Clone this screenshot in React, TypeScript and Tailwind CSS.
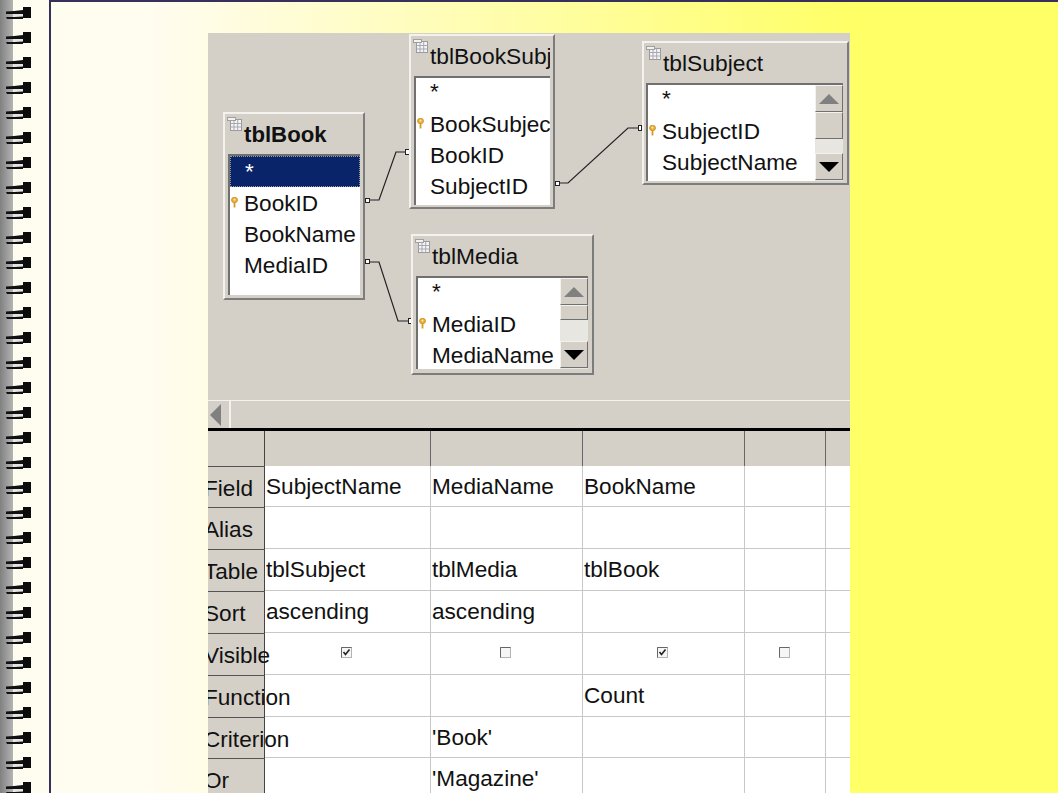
const SANS = "font-['Liberation_Sans',Arial,sans-serif]"

interface Field {
  name: string
  isKey?: boolean
  selected?: boolean
}

interface TableNodeProps {
  title: string
  bold?: boolean
  fields: Field[]
  className: string
  listClass: string
  scroll?: 'subject' | 'media'
}

function TableIcon() {
  return (
    <svg width="15" height="15" viewBox="0 0 15 15" className="absolute left-[2px] top-[2px]">
      <rect x="3.5" y="3.5" width="11" height="11" fill="#f4f4f4" stroke="#9a9a9a" />
      <path d="M3.5 7.5H14.5M3.5 11H14.5M7 3.5V14.5M10.7 3.5V14.5" stroke="#a8a8b4" fill="none" />
      <rect x="0.5" y="1.5" width="8" height="3" fill="#f2f2f2" stroke="#a0a0a0" />
    </svg>
  )
}

function KeyIcon() {
  return (
    <svg width="7" height="11" viewBox="0 0 7 11" className="absolute left-[1px] top-[9px]">
      <ellipse cx="3.5" cy="3" rx="3" ry="2.8" fill="#f0b030" stroke="#b07a18" strokeWidth="0.6" />
      <rect x="2.6" y="5" width="1.8" height="5.5" fill="#d89a24" />
      <circle cx="3.5" cy="2.6" r="0.9" fill="#fff2c0" />
    </svg>
  )
}

function ScrollButton({ dir, muted }: { dir: 'up' | 'down'; muted?: boolean }) {
  return (
    <div className="flex h-[27px] items-center justify-center border border-t-[#f4f2ee] border-l-[#f4f2ee] border-r-[#707070] border-b-[#707070] bg-[#d4d0c8]">
      <svg width="22" height="12" viewBox="0 0 22 12">
        <path d={dir === 'up' ? 'M11 1L21 11H1Z' : 'M1 1H21L11 11Z'} fill={muted ? '#808080' : '#000000'} />
      </svg>
    </div>
  )
}

function TableNode({ title, bold, fields, className, listClass, scroll }: TableNodeProps) {
  return (
    <div className={`absolute flex flex-col border-2 border-t-[#f4f2ee] border-l-[#f4f2ee] border-r-[#7c7c7c] border-b-[#7c7c7c] bg-[#d4d0c8] ${className}`}>
      <TableIcon />
      <div className={`mr-[3px] h-[40px] shrink-0 overflow-hidden whitespace-nowrap pl-[19px] leading-[26px] text-[#111] ${bold ? 'pt-[8px] text-[22.2px] font-bold' : 'pt-[7px] text-[22.8px]'}`}>
        {title}
      </div>
      <div className={`relative flex overflow-hidden border-t-2 border-l-2 border-t-[#707070] border-l-[#707070] bg-white ${listClass}`}>
        <div className="min-w-0 flex-1">
          {fields.map((f) => (
            <div
              key={f.name}
              className={`relative h-[31px] overflow-hidden whitespace-nowrap pl-[14px] text-[22.6px] ${
                f.selected
                  ? 'mb-[1px] border border-dotted border-[#9a9a9a] bg-[#0a246a] leading-[29px] text-white'
                  : f.name === '*'
                    ? 'leading-[27px] text-[#111]'
                    : 'leading-[32px] text-[#111]'
              }`}
            >
              {f.isKey && <KeyIcon />}
              {f.name}
            </div>
          ))}
        </div>
        {scroll === 'subject' && (
          <div className="flex w-[28px] shrink-0 flex-col bg-[#e8e6e1]">
            <ScrollButton dir="up" muted />
            <div className="h-[27px] border border-t-[#f4f2ee] border-l-[#f4f2ee] border-r-[#707070] border-b-[#707070] bg-[#d4d0c8]" />
            <div className="h-[14px]" />
            <ScrollButton dir="down" />
          </div>
        )}
        {scroll === 'media' && (
          <div className="flex w-[28px] shrink-0 flex-col bg-[#e8e6e1]">
            <ScrollButton dir="up" muted />
            <div className="h-[15px] border border-t-[#f4f2ee] border-l-[#f4f2ee] border-r-[#707070] border-b-[#707070] bg-[#d4d0c8]" />
            <div className="h-[21px]" />
            <ScrollButton dir="down" />
          </div>
        )}
      </div>
    </div>
  )
}

function Connectors() {
  // coordinates are relative to the diagram area
  return (
    <svg width="642" height="367" viewBox="0 0 642 367" className="absolute left-0 top-0" fill="none">
      <path d="M161 167H171L188 119H198" stroke="#222" strokeWidth="1.2" />
      <path d="M161 229H171L190 288H200" stroke="#222" strokeWidth="1.2" />
      <path d="M351 150H360L420 95H430" stroke="#222" strokeWidth="1.2" />
      <g fill="#fff" stroke="#222">
        <rect x="157.5" y="165.5" width="4" height="4" />
        <rect x="197.5" y="116.5" width="4" height="5" />
        <rect x="157.5" y="226.5" width="4" height="4" />
        <rect x="200.5" y="285.5" width="3" height="5" />
        <rect x="347.5" y="148.5" width="4" height="4" />
        <rect x="430.5" y="92.5" width="3" height="5" />
      </g>
    </svg>
  )
}

function Check({ on }: { on?: boolean }) {
  return (
    <div className="flex h-full items-start justify-center pr-[3px] pt-[14px]">
      <svg width="11" height="11" viewBox="0 0 11 11">
        <rect x="0.5" y="0.5" width="10" height="10" fill="#f6f6f6" stroke="#b4b4b4" />
        <path d="M0.5 10.5V0.5H10.5" stroke="#666" fill="none" />
        {on && <path d="M2.5 5L4.5 7.5L8.5 2.5" stroke="#222" strokeWidth="1.6" fill="none" />}
      </svg>
    </div>
  )
}

const rows: { label: string; cells: (string | boolean | null)[]; h: string }[] = [
  { label: 'Field', cells: ['SubjectName', 'MediaName', 'BookName', null, null], h: 'h-[41px]' },
  { label: 'Alias', cells: [null, null, null, null, null], h: 'h-[42px]' },
  { label: 'Table', cells: ['tblSubject', 'tblMedia', 'tblBook', null, null], h: 'h-[42px]' },
  { label: 'Sort', cells: ['ascending', 'ascending', null, null, null], h: 'h-[42px]' },
  { label: 'Visible', cells: [true, false, true, false, null], h: 'h-[42px]' },
  { label: 'Function', cells: [null, null, 'Count', null, null], h: 'h-[42px]' },
  { label: 'Criterion', cells: [null, "'Book'", null, null, null], h: 'h-[41px]' },
  { label: 'Or', cells: [null, "'Magazine'", null, null, null], h: 'h-[42px]' },
]

const colWidths = ['w-[166px]', 'w-[152px]', 'w-[162px]', 'w-[81px]', 'w-[26px]']

function CriteriaGrid() {
  return (
    <div className="flex flex-col text-[22.6px] text-[#111]">
      <div className="flex h-[35px] bg-[#d4d0c8]">
        <div className="w-[57px] shrink-0 border-r border-r-[#444]" />
        {colWidths.map((w) => (
          <div key={w} className={`${w} shrink-0 border-r border-r-[#666]`} />
        ))}
      </div>
      {rows.map((row) => (
        <div key={row.label} className={`flex ${row.h}`}>
          <div className="relative z-10 w-[57px] shrink-0 whitespace-nowrap border-t border-r border-t-[#555] border-r-[#444] bg-[#d4d0c8] pt-[6px] leading-[32px]">
            <span className="-ml-[4px] block">{row.label}</span>
          </div>
          {row.cells.map((c, i) => (
            <div
              key={i}
              className={`${colWidths[i]} shrink-0 whitespace-nowrap border-b border-r border-b-[#c8c8c8] border-r-[#c8c8c8] bg-white pl-[1px] pt-[5px] leading-[32px]`}
            >
              {typeof c === 'string' ? c : typeof c === 'boolean' ? <div className="-mt-[5px] h-full"><Check on={c} /></div> : null}
            </div>
          ))}
        </div>
      ))}
    </div>
  )
}

export default function App() {
  return (
    <div className={`flex h-[793px] w-[1058px] overflow-hidden bg-[#fffcf0] ${SANS}`}>
      {/* spiral binding */}
      <div className="flex w-[49px] shrink-0 flex-col gap-[7px] bg-[linear-gradient(90deg,#808080_0px,#b4b4b4_13px,#fffcf0_13px)] pt-[7px]">
        {Array.from({ length: 32 }).map((_, i) => (
          <svg key={i} width="32" height="18" viewBox="0 0 32 18" className="shrink-0 blur-[0.5px]">
            <path d="M6 4.5C11 4.2 17 4 23 3V7H6Z" fill="#111" />
            <rect x="13" y="7" width="10" height="2.6" fill="#e4e4e4" />
            <path d="M6 10C11 10 17 10 23 9.5V12C17 12 11 12 7 12Z" fill="#111" />
            <rect x="23" y="0" width="8" height="11" fill="#0c0c0c" />
          </svg>
        ))}
      </div>

      {/* slide */}
      <div className="flex-1 border-t-2 border-l-2 border-t-[#38305c] border-l-[#38305c] bg-[linear-gradient(90deg,#fffcf0_0%,#fffcf0_10%,#ffff66_80%)] pl-[157px] pt-[31px]">
        <div className="flex h-[760px] w-[642px] flex-col overflow-hidden bg-[#d4d0c8]">
          <div className="relative h-[367px] shrink-0">
            <Connectors />
            <TableNode
              title="tblBook"
              bold
              className="left-[15px] top-[79px] h-[188px] w-[142px]"
              listClass="ml-[3px] mr-[3px] h-[141px]"
              fields={[{ name: '*', selected: true }, { name: 'BookID', isKey: true }, { name: 'BookName' }, { name: 'MediaID' }]}
            />
            <TableNode
              title="tblBookSubject"
              className="left-[201px] top-px h-[175px] w-[146px]"
              listClass="ml-[3px] mr-[3px] h-[129px]"
              fields={[{ name: '*' }, { name: 'BookSubjectID', isKey: true }, { name: 'BookID' }, { name: 'SubjectID' }]}
            />
            <TableNode
              title="tblSubject"
              className="left-[434px] top-[8px] h-[144px] w-[207px]"
              listClass="ml-[2px] mr-[4px] h-[98px]"
              scroll="subject"
              fields={[{ name: '*' }, { name: 'SubjectID', isKey: true }, { name: 'SubjectName' }]}
            />
            <TableNode
              title="tblMedia"
              className="left-[203px] top-[201px] h-[141px] w-[183px]"
              listClass="ml-[3px] mr-[4px] h-[93px]"
              scroll="media"
              fields={[{ name: '*' }, { name: 'MediaID', isKey: true }, { name: 'MediaName' }]}
            />
          </div>

          {/* horizontal scrollbar */}
          <div className="flex h-[28px] shrink-0 border-t border-t-[#f4f2ee] bg-[#d4d0c8]">
            <div className="flex w-[23px] items-center border-r-2 border-r-[#f4f2ee] pl-[2px]">
              <svg width="12" height="22" viewBox="0 0 12 22">
                <path d="M11 0V22L0 11Z" fill="#808080" />
              </svg>
            </div>
          </div>
          <div className="h-[3px] shrink-0 bg-black" />

          <CriteriaGrid />
        </div>
      </div>
    </div>
  )
}
